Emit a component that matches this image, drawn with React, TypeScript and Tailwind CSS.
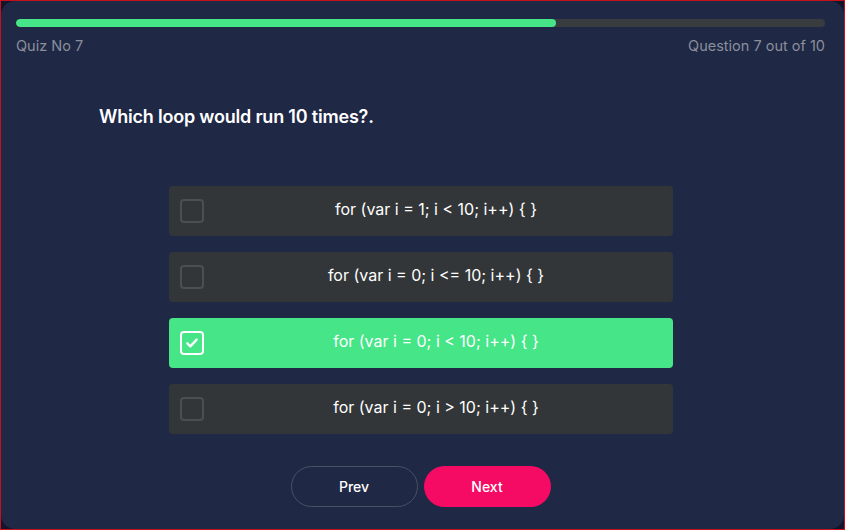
import { useState } from "react";

const options = [
  "for (var i = 1; i < 10; i++) { }",
  "for (var i = 0; i <= 10; i++) { }",
  "for (var i = 0; i < 10; i++) { }",
  "for (var i = 0; i > 10; i++) { }",
];

function CheckBox({ checked }: { checked: boolean }) {
  return (
    <div
      className={`w-6 h-6 rounded-[4px] border-2 flex items-center justify-center shrink-0 ${
        checked ? "border-white" : "border-[#4c4f52]"
      }`}
    >
      {checked && (
        <svg viewBox="0 0 24 24" className="w-4 h-4" fill="none" stroke="white" strokeWidth="3.5" strokeLinecap="round" strokeLinejoin="round">
          <path d="M5 12.5l4.5 4.5L19 7" />
        </svg>
      )}
    </div>
  );
}

export default function App() {
  const [selected, setSelected] = useState(2);
  const current = 7;
  const total = 10;

  return (
    <div
      className="w-[845px] h-[530px] border border-[#c8101a] bg-[#12152b] overflow-hidden"
      style={{ fontFamily: "Inter, 'Noto Sans', sans-serif" }}
    >
      <div className="h-full bg-[#1f2845] rounded-[14px] flex flex-col pl-[15px] pr-[19px] pt-[18px]">
        {/* Progress */}
        <div className="h-[8px] rounded-full bg-[#393c3f] overflow-hidden">
          <div className="h-full rounded-full bg-[#45e588]" style={{ width: `${(540 / 809) * 100}%` }} />
        </div>
        <div className="flex justify-between mt-[8px] text-[14.5px] text-[#8a8f9c]">
          <span>Quiz No {current}</span>
          <span>
            Question {current} out of {total}
          </span>
        </div>

        {/* Question */}
        <h1 className="mt-[46px] ml-[83px] text-[18px] font-semibold text-white tracking-[-0.2px]">
          Which loop would run 10 times?.
        </h1>

        {/* Options */}
        <div className="mt-[56px] flex flex-col gap-[16px] items-center">
          {options.map((opt, i) => {
            const active = i === selected;
            return (
              <button
                key={i}
                onClick={() => setSelected(i)}
                className={`w-[504px] h-[50px] rounded-[4px] flex items-center pl-[11px] ${
                  active ? "bg-[#45e588]" : "bg-[#333638]"
                }`}
              >
                <CheckBox checked={active} />
                <span className="flex-1 text-center text-[16px] text-white pr-[4px] mb-[3px]">
                  {opt}
                </span>
              </button>
            );
          })}
        </div>

        {/* Nav */}
        <div className="mt-[32px] flex justify-center gap-[6px]">
          <button className="w-[127px] h-[41px] rounded-full border border-[#4a5163] text-white text-[14px] font-medium">
            Prev
          </button>
          <button className="w-[127px] h-[41px] rounded-full bg-[#f50a64] text-white text-[14px] font-medium">
            Next
          </button>
        </div>
      </div>
    </div>
  );
}
